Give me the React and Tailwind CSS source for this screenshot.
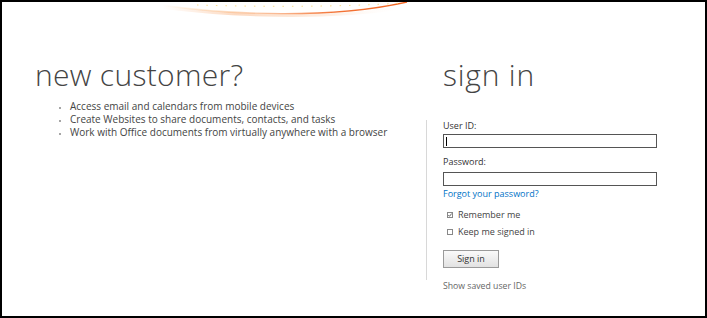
import React from 'react';

const font = { fontFamily: '"Open Sans", "Liberation Sans", sans-serif' };

const Arc = () => (
    <svg className="absolute left-0 top-0 pointer-events-none" width="707" height="24" viewBox="0 0 707 24">
        <defs>
            <linearGradient id="arcLine" x1="160" y1="0" x2="405" y2="0" gradientUnits="userSpaceOnUse">
                <stop offset="0" stopColor="#f7941d" stopOpacity="0" />
                <stop offset="0.35" stopColor="#f9a870" stopOpacity="0.5" />
                <stop offset="0.7" stopColor="#f26522" stopOpacity="0.9" />
                <stop offset="1" stopColor="#f26522" />
            </linearGradient>
            <linearGradient id="arcGlow" x1="160" y1="0" x2="405" y2="0" gradientUnits="userSpaceOnUse">
                <stop offset="0" stopColor="#fbd0b0" stopOpacity="0" />
                <stop offset="0.3" stopColor="#fbc9a6" stopOpacity="0.7" />
                <stop offset="0.7" stopColor="#fcd9c0" stopOpacity="0.4" />
                <stop offset="1" stopColor="#fff" stopOpacity="0" />
            </linearGradient>
        </defs>
        <path d="M158 5 C 228 14 320 18 400 6" fill="none" stroke="url(#arcGlow)" strokeWidth="3" />
        <path d="M158 3 C 228 13 330 17 405 0" fill="none" stroke="url(#arcLine)" strokeWidth="1.4" />
        <path d="M195 3 C 260 5 340 5 400 1" fill="none" stroke="#fbd56b" strokeWidth="1" strokeDasharray="1.5 8" opacity="0.8" />
    </svg>
);

const Check = ({ checked, label }) => (
    <div className="flex items-center h-[12px] text-[9px] leading-[12px] text-[#444]">
        <span className="ml-[4px] w-[6px] h-[6px] border border-[#888] bg-white flex items-center justify-center">
            {checked && (
                <svg width="4" height="4" viewBox="0 0 4 4">
                    <path d="M0.3 2 L1.5 3.3 L3.7 0.5" fill="none" stroke="#555" strokeWidth="0.9" />
                </svg>
            )}
        </span>
        <span className="ml-[5px]">{label}</span>
    </div>
);

export default function App() {
    return (
        <div style={font} className="relative w-[707px] h-[318px] border-2 border-black bg-white overflow-hidden">
            <Arc />
            <div className="flex">
                {/* new customer */}
                <div className="w-[424px] pl-[33px] pt-[58px]">
                    <h1 className="text-[30px] leading-[30px] font-light tracking-[0.3px] text-[#444]">new customer?</h1>
                    <ul className="mt-[10px] pl-[35px] list-disc marker:text-[#888] marker:text-[7px] text-[10px] leading-[13px] text-[#444]">
                        <li>Access email and calendars from mobile devices</li>
                        <li>Create Websites to share documents, contacts, and tasks</li>
                        <li>Work with Office documents from virtually anywhere with a browser</li>
                    </ul>
                </div>

                {/* sign in */}
                <div className="flex-1 pt-[58px]">
                    <h1 className="pl-[17px] text-[30px] leading-[30px] font-light tracking-[0.8px] text-[#444]">sign in</h1>
                    <div className="mt-[30px] border-l border-[#d8d8d8] pl-[16px] pb-[12px]">
                        <div className="text-[9px] leading-[12px] text-[#333]">User ID:</div>
                        <div className="mt-[2px] w-[214px] h-[14px] border border-[#555] bg-white flex items-center pl-[2px]">
                            <span className="w-px h-[9px] bg-black" />
                        </div>
                        <div className="mt-[8px] text-[9px] leading-[12px] text-[#333]">Password:</div>
                        <div className="mt-[4px] w-[214px] h-[14px] border border-[#555] bg-white" />
                        <div className="mt-[2px] text-[9px] leading-[12px] text-[#0072c6]">Forgot your password?</div>
                        <div className="mt-[9px]">
                            <Check checked label="Remember me" />
                        </div>
                        <div className="mt-[5px]">
                            <Check label="Keep me signed in" />
                        </div>
                        <button className="mt-[12px] w-[56px] h-[18px] border border-[#9a9a9a] bg-gradient-to-b from-[#fafafa] to-[#e2e2e2] text-[9px] leading-[16px] text-[#333]">
                            Sign in
                        </button>
                    </div>
                    <div className="pl-[17px] text-[8.7px] leading-[12px] text-[#666]">Show saved user IDs</div>
                </div>
            </div>
        </div>
    );
}
